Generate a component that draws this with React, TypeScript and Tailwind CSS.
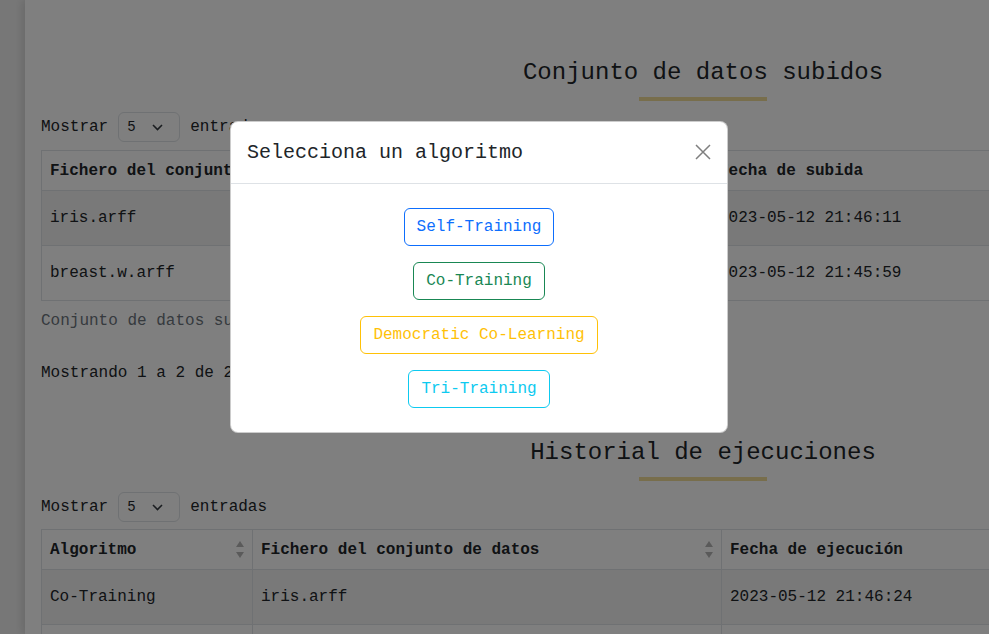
const ALGORITHMS: { label: string; tone: string }[] = [
  { label: 'Self-Training', tone: 'border-[#0d6efd] text-[#0d6efd]' },
  { label: 'Co-Training', tone: 'border-[#198754] text-[#198754]' },
  { label: 'Democratic Co-Learning', tone: 'border-[#ffc107] text-[#ffc107]' },
  { label: 'Tri-Training', tone: 'border-[#0dcaf0] text-[#0dcaf0]' },
];

function SortIcon() {
  return (
    <svg width="8" height="17" viewBox="0 0 8 17" className="shrink-0">
      <path d="M4 0 L8 6 L0 6 Z" fill="#b5b5b5" />
      <path d="M4 17 L8 11 L0 11 Z" fill="#b5b5b5" />
    </svg>
  );
}

function LengthPicker() {
  return (
    <div className="flex h-[30px] items-center gap-[10px]">
      <span>Mostrar</span>
      <div className="flex h-[30px] w-[62px] items-center justify-between rounded-[6px] border border-[#dee2e6] pl-[8px] pr-[16px] text-[14px]">
        <span>5</span>
        <svg width="11" height="7" viewBox="0 0 11 7" fill="none">
          <path d="M1 1 L5.5 5.5 L10 1" stroke="#343a40" strokeWidth="1.6" />
        </svg>
      </div>
      <span>entradas</span>
    </div>
  );
}

function SectionTitle({ children }: { children: string }) {
  return (
    <div className="flex flex-col items-center">
      <h2 className="text-[24px] leading-[29px]">{children}</h2>
      <div className="mt-[10px] h-[4px] w-[128px] bg-[#f0dc98]" />
    </div>
  );
}

function HeadCell({ label, width, sort = true }: { label: string; width?: string; sort?: boolean }) {
  return (
    <th className={`h-[40px] border border-[#dee2e6] px-[8px] text-left font-bold ${width ?? ''}`}>
      <div className="flex items-center justify-between">
        <span>{label}</span>
        {sort && <SortIcon />}
      </div>
    </th>
  );
}

const cell = 'h-[55px] border border-[#dee2e6] px-[8px]';

export default function App() {
  return (
    <div className="relative h-[634px] w-[989px] overflow-hidden bg-white font-['Liberation_Mono','Courier_New',monospace] text-[16px] text-[#212529]">
      <div className="flex h-full">
        <aside className="w-[25px] shrink-0 bg-[#efefef]" />
        <main className="w-[1356px] shrink-0 bg-white px-[16px] pt-[58px] shadow-[-3px_0_8px_rgba(0,0,0,0.12)]">
          <SectionTitle>Conjunto de datos subidos</SectionTitle>
          <div className="mt-[11px]">
            <LengthPicker />
          </div>
          <table className="mt-[8px] w-full table-fixed border-collapse">
            <thead>
              <tr>
                <HeadCell label="Fichero del conjunto de datos" width="w-[669px]" />
                <HeadCell label="Fecha de subida" sort={false} />
              </tr>
            </thead>
            <tbody>
              <tr className="bg-[#f2f2f2]">
                <td className={cell}>iris.arff</td>
                <td className={cell}>2023-05-12 21:46:11</td>
              </tr>
              <tr>
                <td className={cell}>breast.w.arff</td>
                <td className={cell}>2023-05-12 21:45:59</td>
              </tr>
            </tbody>
          </table>
          <p className="py-[8px] leading-[24px] text-[#6c757d]">Conjunto de datos subidos</p>
          <p className="mt-[20px] leading-[24px]">Mostrando 1 a 2 de 2 entradas</p>

          <div className="mt-[53px]">
            <SectionTitle>Historial de ejecuciones</SectionTitle>
          </div>
          <div className="mt-[11px]">
            <LengthPicker />
          </div>
          <table className="mt-[7px] w-full table-fixed border-collapse">
            <thead>
              <tr>
                <HeadCell label="Algoritmo" width="w-[211px]" />
                <HeadCell label="Fichero del conjunto de datos" width="w-[469px]" />
                <HeadCell label="Fecha de ejecución" sort={false} />
              </tr>
            </thead>
            <tbody>
              <tr className="bg-[#f2f2f2]">
                <td className={cell}>Co-Training</td>
                <td className={cell}>iris.arff</td>
                <td className={cell}>2023-05-12 21:46:24</td>
              </tr>
              <tr>
                <td className={cell} />
                <td className={cell} />
                <td className={cell} />
              </tr>
            </tbody>
          </table>
        </main>
      </div>

      {/* backdrop + modal */}
      <div className="absolute inset-0 bg-black/50" />
      <div className="absolute left-[230px] top-[121px] w-[498px] rounded-[8px] border border-black/20 bg-white">
        <div className="flex h-[62px] items-center justify-between border-b border-[#dee2e6] pl-[16px] pr-[16px]">
          <h5 className="text-[20px] leading-[30px]">Selecciona un algoritmo</h5>
          <svg width="16" height="16" viewBox="0 0 16 16" className="mb-[1px]">
            <path d="M1 1 L15 15 M15 1 L1 15" stroke="rgba(0,0,0,0.5)" strokeWidth="1.5" />
          </svg>
        </div>
        <div className="flex flex-col items-center p-[16px]">
          {ALGORITHMS.map((a) => (
            <button
              key={a.label}
              className={`my-[8px] h-[38px] rounded-[6px] border bg-white px-[12px] leading-[24px] ${a.tone}`}
            >
              {a.label}
            </button>
          ))}
        </div>
      </div>
    </div>
  );
}
